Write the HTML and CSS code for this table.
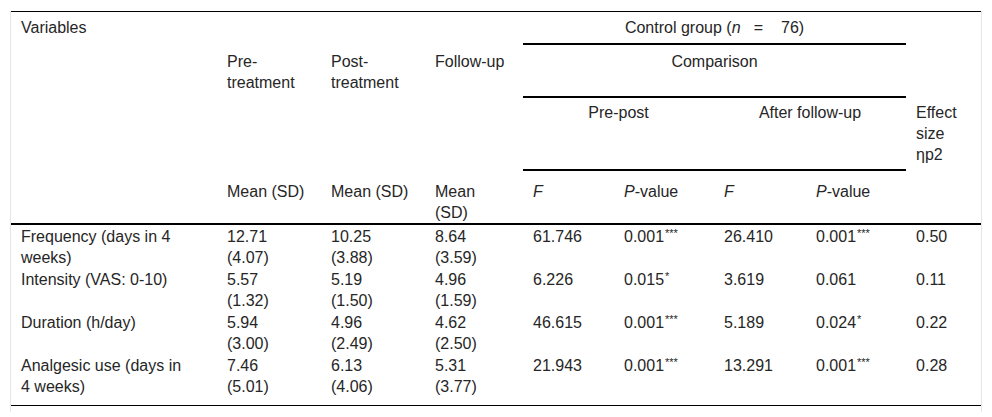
FILE: index.html
```html
<!DOCTYPE html>
<html lang="en">
<head>
<meta charset="utf-8">
<title>Table</title>
<link rel="stylesheet" href="styles.css">
</head>
<body>
<div class="wrap">
<table class="tbl">
<colgroup>
<col class="c1"><col class="c2"><col class="c3"><col class="c4"><col class="c5"><col class="c6"><col class="c7"><col class="c8"><col class="c9">
</colgroup>
<thead>
<tr class="h1">
<th class="first">Variables</th><th></th><th></th><th></th>
<th colspan="4" class="center rule">Control group (<i>n</i>&nbsp;&nbsp;&nbsp;=&nbsp;&nbsp;&nbsp;&nbsp;76)</th>
<th></th>
</tr>
<tr class="h2">
<th class="first"></th><th>Pre-treatment</th><th>Post-treatment</th><th>Follow-up</th>
<th colspan="4" class="center rule">Comparison</th>
<th></th>
</tr>
<tr class="h3">
<th class="first"></th><th></th><th></th><th></th>
<th colspan="2" class="center rule">Pre-post</th>
<th colspan="2" class="center rule">After follow-up</th>
<th>Effect size ηp2</th>
</tr>
<tr class="h4">
<th class="first"></th><th>Mean (SD)</th><th>Mean (SD)</th><th>Mean (SD)</th>
<th><i>F</i></th><th><i>P</i>-value</th><th><i>F</i></th><th><i>P</i>-value</th>
<th></th>
</tr>
</thead>
<tbody>
<tr>
<td class="first">Frequency (days in 4 weeks)</td><td>12.71<br>(4.07)</td><td>10.25<br>(3.88)</td><td>8.64<br>(3.59)</td>
<td>61.746</td><td>0.001<sup>***</sup></td><td>26.410</td><td>0.001<sup>***</sup></td><td>0.50</td>
</tr>
<tr>
<td class="first">Intensity (VAS: 0-10)</td><td>5.57<br>(1.32)</td><td>5.19<br>(1.50)</td><td>4.96<br>(1.59)</td>
<td>6.226</td><td>0.015<sup>*</sup></td><td>3.619</td><td>0.061</td><td>0.11</td>
</tr>
<tr>
<td class="first">Duration (h/day)</td><td>5.94<br>(3.00)</td><td>4.96<br>(2.49)</td><td>4.62<br>(2.50)</td>
<td>46.615</td><td>0.001<sup>***</sup></td><td>5.189</td><td>0.024<sup>*</sup></td><td>0.22</td>
</tr>
<tr class="last">
<td class="first">Analgesic use (days in 4 weeks)</td><td>7.46<br>(5.01)</td><td>6.13<br>(4.06)</td><td>5.31<br>(3.77)</td>
<td>21.943</td><td>0.001<sup>***</sup></td><td>13.291</td><td>0.001<sup>***</sup></td><td>0.28</td>
</tr>
</tbody>
</table>
</div>
</body>
</html>
```
FILE: styles.css
```css
html, body {
  margin: 0;
  padding: 0;
  background: #ffffff;
}

body {
  font-family: "Liberation Sans", Arial, sans-serif;
  font-size: 16px;
  color: #262626;
}

.wrap {
  margin: 11px 0 0 10px;
  width: 970px;
  border-left: 1px solid #e6e6e6;
  border-right: 1px solid #e6e6e6;
  padding-bottom: 6px;
}

.tbl {
  width: 970px;
  table-layout: fixed;
  border-collapse: separate;
  border-spacing: 0;
  border-top: 1px solid #000;
  border-bottom: 1px solid #000;
}

.c1 { width: 206px; }
.c2 { width: 104px; }
.c3 { width: 104px; }
.c4 { width: 98px; }
.c5 { width: 91px; }
.c6 { width: 100px; }
.c7 { width: 92px; }
.c8 { width: 100px; }
.c9 { width: 75px; }

.tbl th,
.tbl td {
  text-align: left;
  vertical-align: top;
  font-weight: normal;
  line-height: 21px;
  padding-left: 10px;
  padding-right: 14px;
}

.tbl .first {
  padding-right: 32px;
}

.tbl th.center {
  text-align: center;
  padding-left: 0;
  padding-right: 0;
}

.tbl th.rule {
  border-bottom: 2px solid #000;
}

.h1 th { padding-top: 5px; padding-bottom: 5px; }
.h2 th { padding-top: 6px; padding-bottom: 5px; }
.h3 th { padding-top: 4px; padding-bottom: 6px; }
.h4 th {
  padding-top: 10px;
  padding-bottom: 0;
  border-bottom: 2px solid #000;
}

.tbl td {
  padding-top: 1px;
  padding-bottom: 0;
}

.tbl tr.last td {
  padding-bottom: 8px;
}

sup {
  font-size: 11px;
  line-height: 0;
  vertical-align: 5px;
  margin-left: 1px;
}
```
